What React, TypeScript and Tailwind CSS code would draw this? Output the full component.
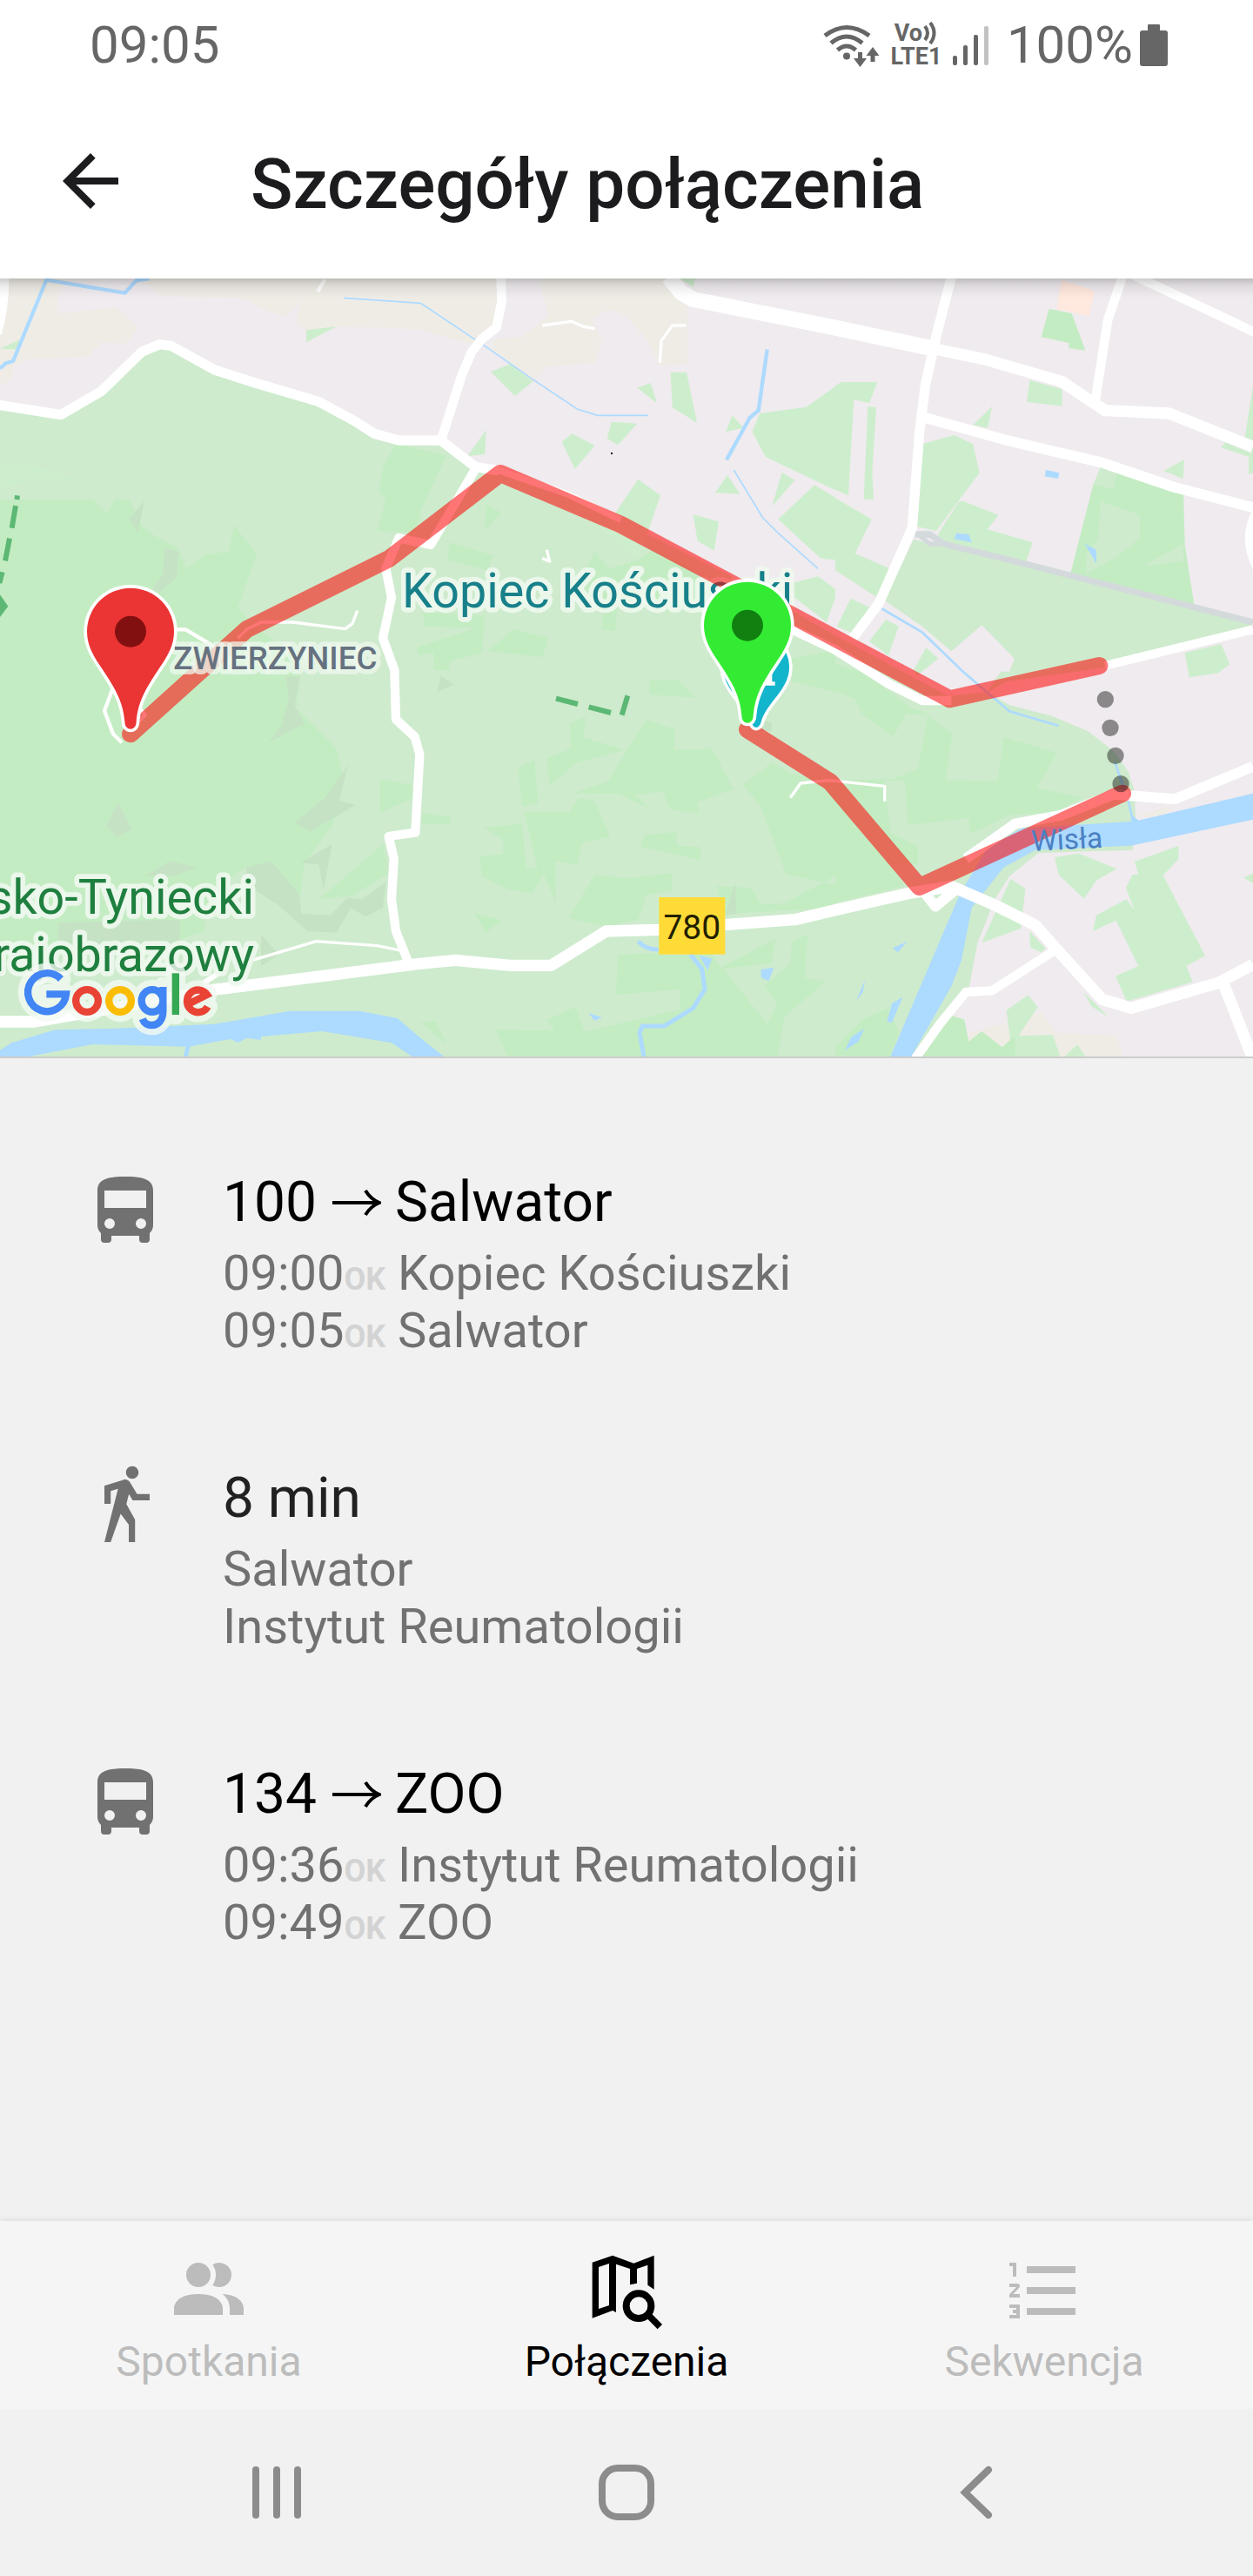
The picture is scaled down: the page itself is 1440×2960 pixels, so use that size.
import type { ReactNode } from 'react';

const BUS =
  'M18,11H6V6H18M16.5,17A1.5,1.5 0 0,1 15,15.5A1.5,1.5 0 0,1 16.5,14A1.5,1.5 0 0,1 18,15.5A1.5,1.5 0 0,1 16.5,17M7.5,17A1.5,1.5 0 0,1 6,15.5A1.5,1.5 0 0,1 7.5,14A1.5,1.5 0 0,1 9,15.5A1.5,1.5 0 0,1 7.5,17M4,16C4,16.88 4.39,17.67 5,18.22V20A1,1 0 0,0 6,21H7A1,1 0 0,0 8,20V19H16V20A1,1 0 0,0 17,21H18A1,1 0 0,0 19,20V18.22C19.61,17.67 20,16.88 20,16V6C20,2.5 16.42,2 12,2C7.58,2 4,2.5 4,6V16Z';
const WALK =
  'M14.12,10H19V8.2H15.38L13.38,4.87C13.08,4.37 12.54,4.03 11.92,4.03C11.74,4.03 11.58,4.06 11.42,4.11L6,5.8V11H7.8V7.33L9.91,6.67L6,22H7.8L10.67,13.89L13,17V22H14.8V15.59L12.31,11.05L13.04,8.18M14,3.8C15,3.8 15.8,3 15.8,2C15.8,1 15,0.2 14,0.2C13,0.2 12.2,1 12.2,2C12.2,3 13,3.8 14,3.8Z';
const PEOPLE =
  'M16 17V19H2V17S2 13 9 13 16 17 16 17M12.5 7.5A3.5 3.5 0 1 0 9 11A3.5 3.5 0 0 0 12.5 7.5M15.94 13A5.32 5.32 0 0 1 18 17V19H22V17S22 13.37 15.94 13M15 4A3.39 3.39 0 0 0 13.07 4.59A5 5 0 0 1 13.07 10.41A3.39 3.39 0 0 0 15 11A3.5 3.5 0 0 0 15 4Z';
const NUMBERED =
  'M7,13V11H21V13H7M7,19V17H21V19H7M7,7V5H21V7H7M3,8V5H2V4H4V8H3M2,17V16H5V20H2V19H4V18.5H3V17.5H4V17H2M4.25,10A0.75,0.75 0 0,1 5,10.75C5,10.95 4.92,11.14 4.79,11.27L3.12,13H5V14H2V13.08L4,11H2V10H4.25Z';
const BACK = 'M20 11H7.83l5.59-5.59L12 4l-8 8 8 8 1.41-1.41L7.83 13H20v-2z';

function Icon({ d }: { d: string }) {
  return (
    <svg viewBox="0 0 24 24" className="block size-24" fill="currentColor" aria-hidden="true">
      <path d={d} />
    </svg>
  );
}

function MapSearchIcon() {
  return (
    <svg viewBox="36 15 288 288" className="block size-24" fill="currentColor" aria-hidden="true">
      <path
        fillRule="evenodd"
        d="M62 62L132 38L205 65L275 38V155L253 140V71L216 84V134L192 139V84L144 68V234L132 228L62 254ZM84 78V222L120 210V66Z"
      />
      <circle cx="222" cy="212" r="43" fill="none" stroke="currentColor" strokeWidth="24" />
      <path d="M250 238L295 284" stroke="currentColor" strokeWidth="23" />
    </svg>
  );
}

function StatusBar() {
  return (
    <div className="flex h-24 items-center justify-between bg-white pt-2 pl-[103px] pr-[98px] text-[60px] leading-none text-[#666666]">
      <time>09:05</time>
      <div className="flex items-center">
        <svg viewBox="945 24 66 49" className="mr-3 h-[49px] w-[66px]" fill="none" stroke="#666666" strokeWidth="5" aria-label="Wi-Fi">
          <path d="M948 37Q973 18 999 37M955 45.500Q973 30.500 991 45.500M962.500 53.500Q973 44.500 983.500 53.500" />
          <circle cx="973" cy="60.500" r="4" fill="#666666" stroke="none" />
          <path d="M988.500 56V65M1003 58V67" />
          <path d="M981 63H996L988.500 73ZM995.500 60L1003 50L1010.500 60Z" fill="#666666" stroke="none" />
        </svg>
        <div className="mr-3 flex w-[60px] flex-col items-center text-[27px] leading-[27px] font-bold">
          <div className="flex items-center">
            <span>Vo</span>
            <svg viewBox="0 0 18 27" className="h-[27px] w-[18px]" fill="none" stroke="#666666" strokeWidth="4" aria-hidden="true">
              <path d="M3 5Q9 13 3 21M9 1Q18 13 9 25" />
            </svg>
          </div>
          <span>LTE1</span>
        </div>
        <svg viewBox="0 0 42 46" className="mr-5 h-[46px] w-[42px]" fill="#666666" aria-label="Zasięg">
          <rect x="0" y="35" width="5" height="11" rx="2" />
          <rect x="12" y="23" width="5" height="23" rx="2" />
          <rect x="24" y="11" width="5" height="35" rx="2" />
          <rect x="36" y="1" width="5" height="45" rx="2" fill="#c2c2c2" />
        </svg>
        <span>100%</span>
        <svg viewBox="0 0 32 48" className="ml-2 h-12 w-8" fill="#666666" aria-label="Bateria">
          <path d="M9 1Q9 0 10 0H22Q23 0 23 1V7H29Q32 7 32 10V45Q32 48 29 48H3Q0 48 0 45V10Q0 7 3 7H9Z" />
        </svg>
      </div>
    </div>
  );
}

function Tile({ c = 0, r = 0, children }: { c?: number; r?: number; children: ReactNode }) {
  return <g transform={`translate(${c * 1440} ${r * 1350})`}>{children}</g>;
}

function Pin({ x, y, fill, dot }: { x: number; y: number; fill: string; dot: string }) {
  return (
    <g transform={`translate(${x} ${y})`}>
      <path
        d="M0-150A150 150 0 0 1 150 0C150 45 130 80 107 115C60 185 26 235 20 310C20 328 10 336 0 336C-10 336-20 328-20 310C-26 235-60 185-107 115C-130 80-150 45-150 0A150 150 0 0 1 0-150Z"
        fill={fill}
        stroke="#fff"
        strokeWidth="22"
        paintOrder="stroke"
      />
      <circle r="54" fill={dot} />
    </g>
  );
}

function GoogleMark({ halo }: { halo?: boolean }) {
  const tint = (color: string) => (halo ? '#f3faf3' : color);
  const w = halo ? 68 : 25;
  return (
    <g fill="none" strokeWidth={w} strokeLinejoin={halo ? 'round' : 'miter'} strokeLinecap={halo ? 'round' : 'butt'}>
      <path d="M210 1095A66 66 0 1 0 228 1147H160" stroke={tint('#4285f4')} />
      <circle cx="300" cy="1170" r="38.500" stroke={tint('#e94335')} />
      <circle cx="414" cy="1170" r="38.500" stroke={tint('#fbbc04')} />
      <path d="M562 1122V1206C562 1236 546 1254 524 1254C507 1254 496 1245 491 1232M562 1170A37 38.500 0 1 1 488 1170A37 38.500 0 1 1 562 1170" stroke={tint('#4285f4')} />
      <path d="M605.500 1075V1218" stroke={tint('#34a853')} />
      <path d="M716 1190A38 38.500 0 1 1 714 1149L652 1180" stroke={tint('#e94335')} />
    </g>
  );
}

function RouteMap() {
  return (
    <svg viewBox="0 30 4320 2682" className="block w-full" role="img" aria-label="Mapa trasy">
      <defs>
        <linearGradient id="top-shade" x1="0" y1="0" x2="0" y2="1">
          <stop offset="0" stopColor="#000" stopOpacity=".2" />
          <stop offset=".4" stopColor="#000" stopOpacity=".07" />
          <stop offset="1" stopColor="#000" stopOpacity="0" />
        </linearGradient>
      </defs>
      <rect y="30" width="4320" height="2682" fill="#efebee" />

      <g fill="#efece6">
        <path d="M40 30H240L200 75L195 150L400 130L475 200L440 255L350 250L300 300L100 308L45 330L40 380L0 400V30Z" />
        <path d="M480 30H1725V200L1640 260L1440 205L1150 195L1060 212L1020 180L1040 105L980 165L900 130L840 98L560 90Z" />
        <path d="M1860 30H2300L2370 120V325L2270 330L2230 240L2160 160L2100 135L2040 170L2075 250L2050 320L1880 335L1840 380L1700 280V240L1800 230L1890 160Z" />
        <path d="M3310 2640L3590 2560L3640 2630L3850 2640L3870 2712H3400Z" />
        <path d="M3915 1880L4040 1850L4000 1890Z" />
      </g>

      <path
        fill="#ceebcd"
        d="M0 470L210 500L350 420L490 282L550 257L590 262L740 345L880 390L1100 455L1220 520L1290 565L1375 590L1520 590L1640 680L1725 690L1960 770L2140 865L2500 1045L2880 1260L3270 1470L3400 1455L3480 1500L3630 1540L3750 1590L3840 1660L3890 1730L3912 1800L3915 1900L3905 2000L3580 2010L3480 2090L3430 2170L3370 2320L3340 2480L3320 2500L3140 2712H0Z"
      />

      <g fill="#cdeecd">
        <path d="M0 272L70 240L55 275ZM1056 208L1160 195L1056 250ZM0 670H100L270 722L100 720L0 760Z" />
        <Tile c={1}>
          <path d="M905 30H957L950 60ZM252 352L320 325L398 385L335 435ZM757 407L803 390L825 460ZM872 353H927L963 527L878 475ZM668 524L757 530L690 604L653 582ZM497 593L532 565L611 606L542 687ZM236 552L232 636L172 642ZM1085 502L1123 545L1062 558ZM1068 708L1111 773L1026 768ZM1256 698L1300 725L1222 815ZM760 722L837 778L760 1000L640 900ZM950 844L1038 868L1022 968L965 935ZM1180 495L1340 473L1440 402V760L1200 645L1153 558ZM1368 742L1440 785V1000L1390 995L1243 860ZM1290 1080L1380 1057L1440 1100V1130L1410 1215L1300 1130Z" />
        </Tile>
        <Tile c={2}>
          <path d="M0 400L20 387H145L117 460L64 447L45 778L0 758ZM112 471L141 475L127 700L132 791H98ZM0 787L125 860L68 978L187 1030L142 1128L0 1036ZM670 380L782 412V470L660 455ZM541 470L525 545L475 535ZM303 600L410 570L474 600L497 700L430 790L348 900L280 885ZM440 797L562 845L525 895L680 940L655 1015L360 945L355 910L425 800ZM1440 400V640L1412 580ZM1330 612L1345 595L1440 635V700L1425 705V645ZM1132 693L1203 655L1199 720ZM53 1133L120 1165L55 1250L5 1230ZM175 1205L218 1230L183 1330L117 1280ZM313 1303L355 1340L280 1400L270 1380ZM1205 1320L1330 1290L1360 1360L1320 1390L1220 1405Z" />
        </Tile>
        <Tile c={2} r={1}>
          <path d="M756 675L840 662L970 715L900 755L857 818L770 735ZM604 750L655 783L640 920L505 970ZM670 930L725 990L710 1003L672 985ZM1183 636V682L1130 738L1275 1015L1210 1050L1232 1105L1005 1172L966 1085L1045 1050L968 893L888 930L900 875L1003 820L1030 855L1002 780L1025 735L1045 735L1032 690ZM1407 745L1440 732V765ZM590 1203L665 1150L698 1192L632 1290L750 1288L775 1362H620L580 1330L605 1320ZM790 1362L835 1320L862 1362ZM855 1140L945 1228L885 1190Z" />
        </Tile>
      </g>
      <path
        fill="#ceebcd"
        d="M3150 930L3700 1055L4120 1170L4320 1225L3820 1370L3470 1420L3400 1460L3450 1385H3480L3498 1340L3385 1225L3280 1315L3180 1230L3050 1140Z"
      />
      <path
        fill="#c4ecc3"
        d="M3617 135L3695 150L3742 278L3685 270V252L3590 232ZM3795 680L3960 705L4080 770L4085 950L4118 1160L3690 1050L3768 745Z"
      />
      <g fill="#ceebcd">
        <path d="M3795 680L3850 700L3840 755L3770 740ZM3795 798L3930 845V925L3850 990L3745 1048V980L3785 930ZM3940 1022L4080 945V1005Z" />
      </g>
      <path fill="#ffe8de" d="M3660 35L3773 72L3755 160L3643 135Z" />

      <g fill="#c4ecc3">
        <path d="M0 792H320L370 842L395 792H445L490 885L540 920L615 960L640 1030L710 982L790 970L806 880L885 980L820 1165L870 1220L1000 1320L1035 1400L1020 1510L1160 1650L1180 1740L1150 1910L1050 2045L1030 2200L940 2050L850 2060L740 2130L700 2280L560 2330L200 2350L0 2390Z" />
        <path d="M1365 600L1540 640L1450 830L1440 905L1300 900L1330 790L1308 765L1320 680ZM1310 1755L1420 1775V1825L1310 1870ZM1320 1980L1340 2080L1210 2160L1100 2170Z" />
        <Tile c={1}>
          <path d="M110 940L262 985L240 1035L102 1000ZM238 808L290 838L230 900ZM610 970L660 1030L760 1000L820 960L960 1040L1020 1120L880 1180L690 1160L680 1245L635 1240L640 1180L560 1080ZM20 1180L230 1190L222 1320L110 1350V1380H55V1320L0 1330V1300L200 1235L20 1230ZM330 1240L450 1270L430 1335L240 1315ZM1290 1340L1440 1310V1380H1290Z" />
        </Tile>
        <Tile c={1} r={1}>
          <path d="M1290 0H1440V105L1290 70ZM800 65H900L960 125L800 115ZM525 215L580 190L572 262L715 305L550 348L455 430L445 335L528 300ZM787 200L887 235L885 305L1015 300L1088 440L965 485L970 525L870 510L845 447L750 462L800 508L690 455L530 455L655 415ZM346 365L403 340L415 490L360 500ZM368 520H520L560 468L612 485L663 605L567 625L550 700L475 690V830L435 735L395 798L310 785L220 740L215 670L295 665V615L228 572L360 560L375 715H413ZM15 525L115 535L108 562L10 558ZM780 598L893 588V635L975 640V683L768 640ZM610 735L720 748L875 730L880 790L790 805L760 890L650 915L520 885ZM1120 425L1220 350L1300 390L1440 410V740L1260 835L1180 835L1150 780L1030 775L1060 870L1440 850V770L1270 733L1180 495ZM692 1010L1010 1000L1045 1055L1235 955L1220 1040L1055 1060L1205 1250L1240 1180L1195 1120L1285 1040L1290 965L1345 940L1335 1090L1405 1105L1265 1225L1240 1362H310L270 1270L580 1275L905 1200V1130L683 1150ZM445 1235L545 1190L580 1290L480 1285ZM195 868L290 892L235 935ZM10 1245L62 1240L100 1320Z" />
        </Tile>
        <Tile c={2} r={1}>
          <path d="M0 105L70 130L90 180L200 258L245 180L315 185L403 250L380 410L560 412L580 262L765 315L695 435L850 470L760 520L600 530L465 595L460 540L250 565L240 410L170 410L190 590L285 635V700L190 700L240 775L0 830V410L200 405L285 370L320 180L260 160L100 40L0 10ZM400 1220L445 1235L460 1310L505 1275L575 1330L620 1290V1362H300ZM0 1362V1330L100 1230L185 1195L220 1280L190 1362Z" />
        </Tile>
      </g>
      <g fill="#c5e3c4">
        <path d="M498 798L475 905L444 858ZM568 960L615 970L610 1060L550 1112L525 1100L560 1050ZM985 1400L1035 1405L1015 1500L1050 1565L925 1630L970 1570L995 1480ZM407 1835L455 1930L400 1955L368 1915ZM1200 1705L1170 1830L1225 1845L1070 1937L1015 1905L1120 1820ZM1145 1980L1115 2140L1100 2050L1035 2045ZM850 2060L935 2038L1030 2150L1040 2220L1140 2225L1195 2165L1250 2170L1330 2110L1320 2200L1260 2230L1210 2200L1160 2285L1060 2280L960 2190L850 2120ZM500 2090L585 2038L680 2060L600 2090ZM200 2250L620 2240V2320L340 2350L200 2330ZM900 2290L960 2360L900 2400Z" />
        <path d="M1520 1400L1565 1430L1508 1455ZM2535 2112L2540 2220L2500 2225ZM2610 1550L2660 1560V1590L2625 1590Z" />
      </g>

      <g fill="#addaff">
        <path d="M0 2690L40 2665L190 2620L400 2615L740 2600L1000 2555H1240L1370 2580L1440 2640L1530 2712H1420L1350 2665L1110 2625L900 2643V2655L850 2648L822 2664L795 2652L650 2678L320 2670L100 2712H0Z" />
        <Tile c={2} r={1}>
          <path d="M1440 455L1045 548L1018 525L1020 552L640 575L520 650L430 800L190 1362H262L400 1120L435 1030L470 850L580 710L690 650L1020 635L1440 545ZM198 988L248 966L215 1003ZM102 1098L95 1140L72 1170ZM232 1157L195 1245L178 1243L195 1180ZM100 1265L80 1310L32 1342L55 1295Z" />
        </Tile>
        <path d="M3606 690L3652 700L3648 720L3602 712ZM3297 908L3340 912L3350 940L3290 928ZM3740 945L3780 965V1013ZM2410 2363L2455 2375L2440 2415ZM2623 2413L2668 2405L2650 2452L2625 2440ZM2030 2562L2075 2578L2050 2588Z" />
      </g>
      <g fill="none" stroke="#addaff">
        <path d="M0 340L20 322L45 315L160 35L430 80L470 37L515 30M2645 275L2615 485L2585 510L2505 655" strokeWidth="13" strokeLinejoin="round" />
        <path d="M1185 97L1450 115L1675 265L1840 380L1990 480L2060 502H2235M2530 690L2630 855L2680 905L2820 1030" strokeWidth="5" />
        <path d="M3040 1168L3180 1250L3320 1385L3480 1522L3650 1572M3845 1700L3870 1775L3890 1830L3905 1895" strokeWidth="8" />
        <path d="M2200 2315Q2230 2345 2270 2343M2380 2360L2420 2410L2430 2480L2390 2545L2290 2607H2215L2205 2630L2220 2712M650 2670L640 2712" strokeWidth="15" />
      </g>
      <path d="M3155 912H3205L3255 945L3500 1005L4320 1215" fill="none" stroke="#d4dadb" strokeWidth="22" />
      <path d="M3165 912L3205 945L3250 945" fill="none" stroke="#d4dadb" strokeWidth="16" />

      <g fill="none" stroke="#fff" strokeLinejoin="round">
        <path d="M-20 463L210 500L350 418L490 282L550 257L590 262L740 345L880 390L1100 455L1220 520L1290 565L1375 588H1520L1640 680L1720 692" strokeWidth="34" />
        <path d="M1700 685L1960 775L2140 862" strokeWidth="22" />
        <path d="M1727 30L1730 110L1712 198L1660 240L1625 285L1590 370L1520 590" strokeWidth="32" />
        <path d="M1640 685L1485 948L1375 925L1330 1030L1350 1130L1320 1270L1360 1380L1365 1550L1430 1610L1447 1670L1432 1940L1340 1953L1358 2030L1350 2170L1365 2280L1405 2380" strokeWidth="31" />
        <path d="M0 2592H120L420 2540L750 2480L1440 2393L1570 2380L1760 2398H1900L2090 2280L2270 2275L2740 2240L2880 2207L3130 2150L3280 2125L3430 2190L3570 2260L3650 2350L3800 2515L3900 2545L4200 2458L4320 2395" strokeWidth="40" />
        <path d="M3190 2150L3225 2195L3290 2140M3330 2030L3500 1910L3660 1880L3840 1808L4050 1825L4320 1712" strokeWidth="36" />
        <path d="M3155 2720L3240 2600L3330 2490L3420 2485L3630 2350" strokeWidth="31" />
        <path d="M4220 2465L4320 2720" strokeWidth="40" />
        <path d="M2305 25L2350 80L2390 102L2880 200L3220 272" strokeWidth="54" />
        <path d="M3220 272L3400 310L3660 385L3810 485L4030 495L4320 610" strokeWidth="40" />
        <path d="M3280 25L3230 220L3190 400L3170 560L3145 890L3030 1150L2940 1270" strokeWidth="34" />
        <path d="M3190 510L3480 590L3800 665L4050 750L4330 822" strokeWidth="36" />
        <path d="M3870 25L3820 170L3775 460M3900 15L4230 170L4330 218" strokeWidth="32" />
        <path d="M3810 1365L4320 1240M4335 830Q4280 920 4335 1030" strokeWidth="30" />
        <path d="M2700 1225L2880 1310L3060 1425L3180 1485L3280 1485" strokeWidth="32" />
        <path d="M15 30Q15 130 -10 220" strokeWidth="32" />
        <path d="M590 1240H640L740 1300M390 1440L360 1520L390 1600L420 1630M480 1510L500 1535L470 1565M1120 35L1095 75" strokeWidth="13" />
        <path d="M820 1270L850 1240L900 1215H1010L1190 1238L1215 1220L1232 1175M870 2380L1090 2315L1300 2330L1400 2350M2725 1820L2760 1770L2860 1760L3050 1780V1832M1870 192L1970 178L2010 195L2050 203M2275 320L2280 245L2318 192H2365M1885 965L1895 1005L1870 995" strokeWidth="10" />
        <path d="M700 2460L760 2420" strokeWidth="18" />
      </g>

      <g fill="none" stroke="#5cb874" strokeWidth="18">
        <path d="M60 778L58 792M54 813L41 890M33 926L18 1003M8 1042L-2 1080" />
        <path d="M1917 1478L1992 1497M2030 1507L2106 1527M2164 1468L2144 1535" />
        <path d="M0 1120L28 1160L0 1197Z" fill="#5cb874" stroke="none" />
      </g>

      <g fontFamily="Roboto, sans-serif" strokeLinejoin="round" paintOrder="stroke">
        <g stroke="#eef8ee" strokeOpacity=".9" strokeWidth="34">
          <text x="1386" y="1163" fontSize="167" fill="#17808a">Kopiec Kościuszki</text>
          <text x="876" y="2220" fontSize="167" fill="#1f7f3f" textAnchor="end">sko-Tyniecki</text>
          <text x="876" y="2418" fontSize="167" fill="#1f7f3f" textAnchor="end">rajobrazowy</text>
        </g>
      </g>

      <rect x="2272" y="2163" width="228" height="197" fill="#ffdb38" />
      <text x="2386" y="2308" fontSize="117" textAnchor="middle" fill="#222000" fontFamily="Roboto, sans-serif">780</text>
      <path
        d="M450 1600L850 1240L1340 997L1725 702L2140 878L3275 1480L3790 1365M2577 1585L2862 1765L3170 2127L3870 1805"
        fill="none"
        stroke="#f00"
        strokeOpacity=".54"
        strokeWidth="60"
        strokeLinecap="round"
        strokeLinejoin="round"
      />
      <text x="3557" y="2004" fontSize="100" fill="#4a80c2" fontFamily="Roboto, sans-serif" transform="rotate(-3 3557 2004)">Wisła</text>
      <text x="598" y="1378" fontSize="110" fontWeight="500" fill="#667180" stroke="#eef8ee" strokeOpacity=".75" strokeWidth="34" strokeLinejoin="round" paintOrder="stroke" fontFamily="Roboto, sans-serif">
        ZWIERZYNIEC
      </text>
      <g fill="#000" fillOpacity=".42">
        <circle cx="3811" cy="1481" r="29" />
        <circle cx="3828" cy="1579" r="29" />
        <circle cx="3846" cy="1675" r="29" />
        <circle cx="3864" cy="1772" r="29" />
      </g>

      <path
        d="M2607 1255A114 114 0 0 1 2721 1370C2721 1450 2640 1490 2622 1565Q2607 1590 2592 1565C2574 1490 2493 1450 2493 1370A114 114 0 0 1 2607 1255Z"
        fill="#12b5cb"
        stroke="#fff"
        strokeWidth="22"
        paintOrder="stroke"
      />
      <path d="M2645 1385H2662V1420H2672V1433H2630Z" fill="#fff" />
      <Pin x={450} y={1247} fill="#eb3434" dot="#821010" />
      <Pin x={2577} y={1226} fill="#34eb34" dot="#118011" />

      <g transform="translate(0 1350)">
        <g opacity=".8">
          <GoogleMark halo />
        </g>
        <GoogleMark />
      </g>
      <rect x="2106" y="630" width="6" height="6" fill="#000" />
      <rect y="30" width="4320" height="66" fill="url(#top-shade)" />
    </svg>
  );
}

type Stop = { time?: string; name: string };
type Leg = { kind: 'bus' | 'walk'; title: string; target?: string; stops: Stop[] };

const legs: Leg[] = [
  { kind: 'bus', title: '100', target: 'Salwator', stops: [{ time: '09:00', name: 'Kopiec Kościuszki' }, { time: '09:05', name: 'Salwator' }] },
  { kind: 'walk', title: '8 min', stops: [{ name: 'Salwator' }, { name: 'Instytut Reumatologii' }] },
  { kind: 'bus', title: '134', target: 'ZOO', stops: [{ time: '09:36', name: 'Instytut Reumatologii' }, { time: '09:49', name: 'ZOO' }] },
];

function ArrowRight() {
  return (
    <svg viewBox="0 0 58 32" className="h-8 w-[58px] shrink-0" fill="none" stroke="currentColor" strokeWidth="4" role="img" aria-label="→">
      <path d="M2 16H56M40 2Q46 12 56 16Q46 20 40 30" />
    </svg>
  );
}

function LegItem({ leg }: { leg: Leg }) {
  return (
    <li className="flex gap-16">
      <div className="mt-1 shrink-0 text-[#717171]">
        <Icon d={leg.kind === 'bus' ? BUS : WALK} />
      </div>
      <div>
        <h2
          className={
            leg.target
              ? 'flex items-center gap-4 text-[64px] leading-[84px] text-black'
              : 'text-[64px] leading-[84px] text-[#212121]'
          }
        >
          <span>{leg.title}</span>
          {leg.target && (
            <>
              <ArrowRight />
              <span>{leg.target}</span>
            </>
          )}
        </h2>
        <div className="mt-1.5 text-[56px] leading-[66px] text-[#717171]">
          {leg.stops.map((s) => (
            <p key={s.name}>
              {s.time && (
                <>
                  {s.time}
                  <span className="text-[36px] leading-none font-bold text-[#d3d3d3]">OK</span>{' '}
                </>
              )}
              {s.name}
            </p>
          ))}
        </div>
      </div>
    </li>
  );
}

function Tab({ label, active, children }: { label: string; active?: boolean; children: ReactNode }) {
  return (
    <button
      type="button"
      aria-current={active ? 'page' : undefined}
      className={active ? 'flex flex-col items-center pt-8 text-black' : 'flex flex-col items-center pt-8 text-[#bcbcbc]'}
    >
      {children}
      <span className="mt-1.5 text-[48px] leading-[56px]">{label}</span>
    </button>
  );
}

export default function App() {
  return (
    <div className="flex min-h-screen flex-col bg-[#f1f1f1] font-[Roboto,sans-serif]">
      <StatusBar />
      <header className="flex h-56 items-center bg-white pl-14">
        <button type="button" aria-label="Wstecz" className="text-[#1c1c1e]">
          <Icon d={BACK} />
        </button>
        <h1 className="ml-[136px] pt-2 text-[80px] leading-none font-medium text-[#1c1c1e]">Szczegóły połączenia</h1>
      </header>
      <div className="border-b-2 border-[#cccccc]">
        <RouteMap />
      </div>
      <main className="flex-1 px-24 py-[124px]">
        <ul className="flex flex-col gap-[118px]">
          {legs.map((leg) => (
            <LegItem key={leg.title} leg={leg} />
          ))}
        </ul>
      </main>
      <nav className="grid h-[216px] grid-cols-3 items-start bg-[#f5f5f5] shadow-[0_-2px_6px_rgba(0,0,0,0.07)]">
        <Tab label="Spotkania">
          <Icon d={PEOPLE} />
        </Tab>
        <Tab label="Połączenia" active>
          <MapSearchIcon />
        </Tab>
        <Tab label="Sekwencja">
          <Icon d={NUMBERED} />
        </Tab>
      </nav>
      <div className="grid h-48 grid-cols-3 place-items-center bg-[#f1f1f1] px-[117px]">
        <button type="button" aria-label="Ostatnie">
          <svg viewBox="0 0 64 64" className="block size-16" fill="#8c8c8c">
            <rect x="4" y="2" width="8" height="60" rx="4" />
            <rect x="28" y="2" width="8" height="60" rx="4" />
            <rect x="52" y="2" width="8" height="60" rx="4" />
          </svg>
        </button>
        <button type="button" aria-label="Ekran główny">
          <svg viewBox="0 0 64 64" className="block size-16" fill="none" stroke="#8c8c8c" strokeWidth="8">
            <rect x="4" y="4" width="56" height="56" rx="18" />
          </svg>
        </button>
        <button type="button" aria-label="Cofnij">
          <svg viewBox="0 0 64 64" className="block size-16" fill="none" stroke="#8c8c8c" strokeWidth="8" strokeLinecap="round">
            <path d="M46 6L19 32L46 58" />
          </svg>
        </button>
      </div>
    </div>
  );
}
